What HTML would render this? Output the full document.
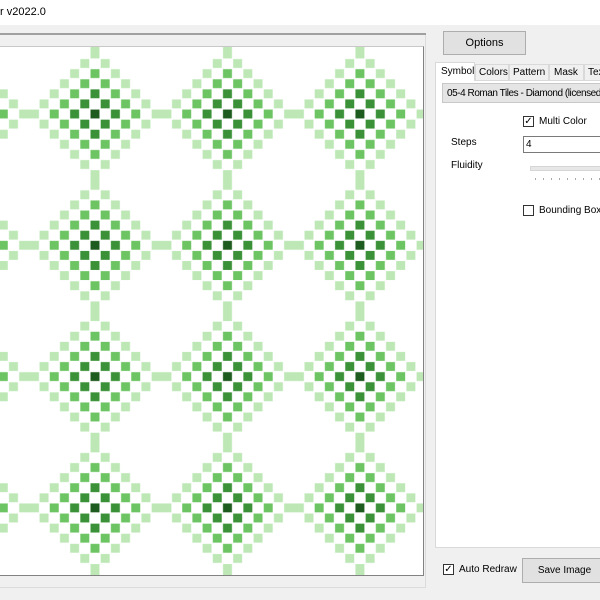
<!DOCTYPE html>
<html><head><style>
body{margin:0;width:600px;height:600px;overflow:hidden;background:#f0f0f0;font-family:"Liberation Sans",sans-serif;font-size:10px;color:#000;position:relative;white-space:nowrap}
.a{position:absolute}
.btn{position:absolute;background:#e1e1e1;border:1px solid #adadad;text-align:center;box-sizing:border-box}
.cb{position:absolute;width:11px;height:11px;border:1px solid #333;background:#fff;box-sizing:border-box}
</style></head><body>
<div class="a" style="left:0;top:0;width:600px;height:25px;background:#fff"></div>
<div class="a" style="left:0;top:6px;font-size:11px">r v2022.0</div>
<div class="a" style="left:0;top:33px;width:426px;height:2px;background:#a0a0a0"></div>
<div class="a" style="left:425px;top:35px;width:1px;height:553px;background:#dcdcdc"></div>
<div class="a" style="left:0;top:587px;width:426px;height:1px;background:#dcdcdc"></div>
<div class="a" style="left:0;top:46px;width:423px;height:528px;background:#fff;border-right:1px solid #828282;border-bottom:1px solid #828282;border-top:1px solid #c8c8c8;overflow:hidden">
<svg width="423" height="528" style="position:absolute;left:0;top:0" viewBox="0 47 423 528">
<defs><pattern id="p" patternUnits="userSpaceOnUse" width="13" height="13" patternTransform="translate(28.76,48.35) scale(10.19,10.1)">
<g fill="#bde8b6">
<rect x="0" y="6.06" width="1" height=".88"/><rect x="12.06" y="6.06" width=".94" height=".88"/>
<rect x="6.06" y="0" width=".88" height="1"/><rect x="6.06" y="12.06" width=".88" height=".94"/>
<rect x="11.06" y="5.06" width=".88" height=".88"/><rect x="11.06" y="7.06" width=".88" height=".88"/>
<rect x="1.06" y="5.06" width=".88" height=".88"/><rect x="1.06" y="7.06" width=".88" height=".88"/>
<rect x="5.06" y="11.06" width=".88" height=".88"/><rect x="7.06" y="11.06" width=".88" height=".88"/>
<rect x="5.06" y="1.06" width=".88" height=".88"/><rect x="7.06" y="1.06" width=".88" height=".88"/>
<rect x="10.06" y="4.06" width=".88" height=".88"/><rect x="10.06" y="8.06" width=".88" height=".88"/>
<rect x="2.06" y="4.06" width=".88" height=".88"/><rect x="2.06" y="8.06" width=".88" height=".88"/>
<rect x="4.06" y="10.06" width=".88" height=".88"/><rect x="8.06" y="10.06" width=".88" height=".88"/>
<rect x="4.06" y="2.06" width=".88" height=".88"/><rect x="8.06" y="2.06" width=".88" height=".88"/>
<rect x="9.06" y="3.06" width=".88" height=".88"/><rect x="9.06" y="9.06" width=".88" height=".88"/>
<rect x="3.06" y="3.06" width=".88" height=".88"/><rect x="3.06" y="9.06" width=".88" height=".88"/>
</g>
<g fill="#6cc462">
<rect x="10.06" y="6.06" width=".88" height=".88"/><rect x="2.06" y="6.06" width=".88" height=".88"/>
<rect x="6.06" y="10.06" width=".88" height=".88"/><rect x="6.06" y="2.06" width=".88" height=".88"/>
<rect x="9.06" y="5.06" width=".88" height=".88"/><rect x="9.06" y="7.06" width=".88" height=".88"/>
<rect x="3.06" y="5.06" width=".88" height=".88"/><rect x="3.06" y="7.06" width=".88" height=".88"/>
<rect x="5.06" y="9.06" width=".88" height=".88"/><rect x="7.06" y="9.06" width=".88" height=".88"/>
<rect x="5.06" y="3.06" width=".88" height=".88"/><rect x="7.06" y="3.06" width=".88" height=".88"/>
<rect x="8.06" y="4.06" width=".88" height=".88"/><rect x="8.06" y="8.06" width=".88" height=".88"/>
<rect x="4.06" y="4.06" width=".88" height=".88"/><rect x="4.06" y="8.06" width=".88" height=".88"/>
</g>
<g fill="#3a9137">
<rect x="8.06" y="6.06" width=".88" height=".88"/><rect x="4.06" y="6.06" width=".88" height=".88"/>
<rect x="6.06" y="8.06" width=".88" height=".88"/><rect x="6.06" y="4.06" width=".88" height=".88"/>
<rect x="7.06" y="5.06" width=".88" height=".88"/><rect x="7.06" y="7.06" width=".88" height=".88"/>
<rect x="5.06" y="5.06" width=".88" height=".88"/><rect x="5.06" y="7.06" width=".88" height=".88"/>
</g>
<rect x="6.06" y="6.06" width=".88" height=".88" fill="#1e5b1f"/>
</pattern></defs>
<rect x="0" y="47" width="423" height="528" fill="url(#p)"/>
</svg></div>

<div class="btn" style="left:443px;top:31px;width:83px;height:24px;line-height:22px;font-size:11px">Options</div>
<div class="a" style="left:435px;top:80px;width:170px;height:468px;background:#fff;border:1px solid #d9d9d9;box-sizing:border-box"></div>
<div class="a" style="left:435px;top:62px;width:420px;height:19px">
<div class="a" style="left:0;top:0;width:40px;height:19px;background:#fff;border:1px solid #d9d9d9;border-bottom:none;box-sizing:border-box;padding:3px 0 0 5px">Symbol</div>
<div class="a" style="left:40px;top:2px;width:34px;height:17px;border:1px solid #d9d9d9;box-sizing:border-box;padding:2px 0 0 3px">Colors</div>
<div class="a" style="left:74px;top:2px;width:40px;height:17px;border:1px solid #d9d9d9;box-sizing:border-box;padding:2px 0 0 3px">Pattern</div>
<div class="a" style="left:114px;top:2px;width:35px;height:17px;border:1px solid #d9d9d9;box-sizing:border-box;padding:2px 0 0 4px">Mask</div>
<div class="a" style="left:149px;top:2px;width:40px;height:17px;border:1px solid #d9d9d9;box-sizing:border-box;padding:2px 0 0 3px">Tex</div>
</div>
<div class="a" style="left:442px;top:83px;width:170px;height:20px;background:#e5e5e5;border:1px solid #c8c8c8;box-sizing:border-box;padding:4px 0 0 4px;overflow:hidden;letter-spacing:-0.45px">05-4 Roman Tiles - Diamond (licensed)</div>
<div class="cb" style="left:523px;top:116px;font-size:10px;line-height:9px;text-align:center">✓</div>
<div class="a" style="left:539px;top:116px">Multi Color</div>
<div class="a" style="left:451px;top:137px">Steps</div>
<div class="a" style="left:523px;top:136px;width:80px;height:17px;background:#fff;border:1px solid #7a7a7a;box-sizing:border-box;padding:2px 0 0 2px">4</div>
<div class="a" style="left:451px;top:160px">Fluidity</div>
<div class="a" style="left:530px;top:166px;width:70px;height:3px;background:#e7e7e7;border:1px solid #d6d6d6"></div>
<div class="a" style="left:535px;top:178px;width:65px;height:2px;background:repeating-linear-gradient(90deg,#aaa 0 1px,transparent 1px 8px)"></div>
<div class="cb" style="left:523px;top:205px"></div>
<div class="a" style="left:539px;top:205px">Bounding Box</div>
<div class="cb" style="left:443px;top:564px;font-size:10px;line-height:9px;text-align:center">✓</div>
<div class="a" style="left:459px;top:564px">Auto Redraw</div>
<div class="btn" style="left:522px;top:558px;width:85px;height:25px;line-height:23px">Save Image</div>
</body></html>
